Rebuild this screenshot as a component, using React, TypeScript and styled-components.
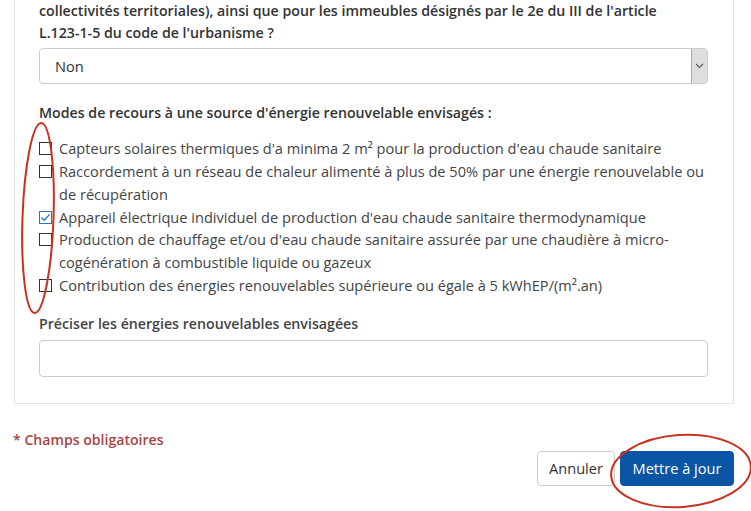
import React, { useState } from 'react';
import styled, { createGlobalStyle } from 'styled-components';

const GlobalStyle = createGlobalStyle`
  html, body {
    margin: 0;
    padding: 0;
    background: #fff;
  }
  body {
    font-family: 'Open Sans', 'Noto Sans', sans-serif;
    color: #333;
  }
`;

const options = [
  { id: 'solaire', checked: false, lines: ["Capteurs solaires thermiques d'a minima 2 m² pour la production d'eau chaude sanitaire"] },
  {
    id: 'reseau',
    checked: false,
    lines: [
      'Raccordement à un réseau de chaleur alimenté à plus de 50% par une énergie renouvelable ou',
      'de récupération',
    ],
  },
  { id: 'thermo', checked: true, lines: ["Appareil électrique individuel de production d'eau chaude sanitaire thermodynamique"] },
  {
    id: 'cogen',
    checked: false,
    lines: [
      "Production de chauffage et/ou d'eau chaude sanitaire assurée par une chaudière à micro-",
      'cogénération à combustible liquide ou gazeux',
    ],
  },
  { id: 'contrib', checked: false, lines: ['Contribution des énergies renouvelables supérieure ou égale à 5 kWhEP/(m².an)'] },
];

const App = () => {
  const [checked, setChecked] = useState<Record<string, boolean>>(
    Object.fromEntries(options.map((o) => [o.id, o.checked]))
  );

  return (
    <Page>
      <GlobalStyle />
      <Panel>
        <Question>
          collectivités territoriales), ainsi que pour les immeubles désignés par le 2e du III de l'article
          <br />
          L.123-1-5 du code de l'urbanisme ?
        </Question>
        <SelectBox>
          <span>Non</span>
          <SelectArrow>
            <svg width="9" height="6" viewBox="0 0 9 6">
              <path d="M1 1l3.5 3.5L8 1" fill="none" stroke="#555" strokeWidth="1.1" />
            </svg>
          </SelectArrow>
        </SelectBox>

        <GroupTitle>Modes de recours à une source d'énergie renouvelable envisagés :</GroupTitle>
        <CheckList>
          {options.map((o) => (
            <CheckRow key={o.id} onClick={() => setChecked({ ...checked, [o.id]: !checked[o.id] })}>
              <CheckBox $checked={checked[o.id]}>
                {checked[o.id] && (
                  <svg width="11" height="11" viewBox="0 0 11 11">
                    <path d="M1.5 5.5l2.8 2.8L9.6 2.4" fill="none" stroke="#2a73c4" strokeWidth="1.3" />
                  </svg>
                )}
              </CheckBox>
              <CheckText>
                {o.lines.map((l, i) => (
                  <React.Fragment key={i}>
                    {i > 0 && <br />}
                    {l}
                  </React.Fragment>
                ))}
              </CheckText>
            </CheckRow>
          ))}
        </CheckList>

        <FieldLabel>Préciser les énergies renouvelables envisagées</FieldLabel>
        <TextInput type="text" />
      </Panel>

      <Footer>
        <Required>* Champs obligatoires</Required>
        <Actions>
          <CancelButton>Annuler</CancelButton>
          <SubmitButton>Mettre à jour</SubmitButton>
        </Actions>
      </Footer>

      <Marks width="751" height="511" viewBox="0 0 751 511">
        <ellipse
          cx="38"
          cy="218"
          rx="15.5"
          ry="95"
          fill="none"
          stroke="#c8321f"
          strokeWidth="2"
          transform="rotate(2 38 218)"
        />
        <ellipse
          cx="681"
          cy="471"
          rx="70"
          ry="36"
          fill="none"
          stroke="#c8321f"
          strokeWidth="2"
          transform="rotate(-4 681 471)"
        />
      </Marks>
    </Page>
  );
};

const Page = styled.div`
  position: relative;
  width: 751px;
  height: 511px;
  overflow: hidden;
`;

const Panel = styled.div`
  margin: 0 17px 0 14px;
  padding: 0 24px 26px;
  border: 1px solid #e4e4e4;
  border-top: none;
  display: flex;
  flex-direction: column;
`;

const Question = styled.div`
  font-size: 14.2px;
  font-weight: 600;
  line-height: 21.5px;
  margin-right: -24px;
  white-space: nowrap;
`;

const SelectBox = styled.div`
  margin-top: 5px;
  width: 669px;
  height: 36px;
  box-sizing: border-box;
  border: 1px solid #ccc;
  border-radius: 4px;
  display: flex;
  align-items: center;
  justify-content: space-between;
  padding-left: 15px;
  font-size: 14.6px;
  color: #333;
  overflow: hidden;
`;

const SelectArrow = styled.div`
  width: 16px;
  height: 100%;
  box-sizing: border-box;
  background: #dedede;
  border-left: 1px solid #aaa;
  display: flex;
  align-items: center;
  justify-content: center;
`;

const GroupTitle = styled.div`
  margin-top: 18px;
  font-size: 14.2px;
  font-weight: 600;
  line-height: 21px;
`;

const CheckList = styled.div`
  margin-top: 14px;
  display: flex;
  flex-direction: column;
`;

const CheckRow = styled.label`
  display: flex;
  align-items: flex-start;
  cursor: pointer;
`;

const CheckBox = styled.span<{ $checked: boolean }>`
  flex: none;
  width: 13px;
  height: 13px;
  box-sizing: border-box;
  margin-top: 5px;
  margin-right: 7px;
  border: 1px solid ${(p) => (p.$checked ? '#2a73c4' : '#333')};
  background: #fff;
  display: flex;
  align-items: center;
  justify-content: center;
`;

const CheckText = styled.span`
  font-size: 14.6px;
  line-height: 22.85px;
  color: #444;
  white-space: nowrap;
`;

const FieldLabel = styled.div`
  margin-top: 16px;
  font-size: 14.2px;
  font-weight: 600;
  line-height: 21px;
  color: #444;
`;

const TextInput = styled.input`
  margin-top: 6px;
  width: 669px;
  height: 37px;
  box-sizing: border-box;
  border: 1px solid #ccc;
  border-radius: 4px;
  outline: none;
`;

const Footer = styled.div`
  padding: 26px 17px 0 13px;
  display: flex;
  flex-direction: column;
`;

const Required = styled.div`
  font-size: 14.1px;
  font-weight: 600;
  color: #a94442;
  line-height: 20px;
`;

const Actions = styled.div`
  margin-top: 1px;
  display: flex;
  justify-content: flex-end;
  gap: 5px;
`;

const CancelButton = styled.button`
  height: 35px;
  width: 78px;
  padding: 0;
  border: 1px solid #ccc;
  border-radius: 4px;
  background: #fff;
  color: #333;
  font-family: inherit;
  font-size: 14.6px;
`;

const SubmitButton = styled.button`
  height: 35px;
  width: 114px;
  padding: 0;
  border: 1px solid #0a55a4;
  border-radius: 4px;
  background: #0a55a4;
  color: #fff;
  font-family: inherit;
  font-size: 14.6px;
`;

const Marks = styled.svg`
  position: absolute;
  left: 0;
  top: 0;
  pointer-events: none;
`;

export default App;
